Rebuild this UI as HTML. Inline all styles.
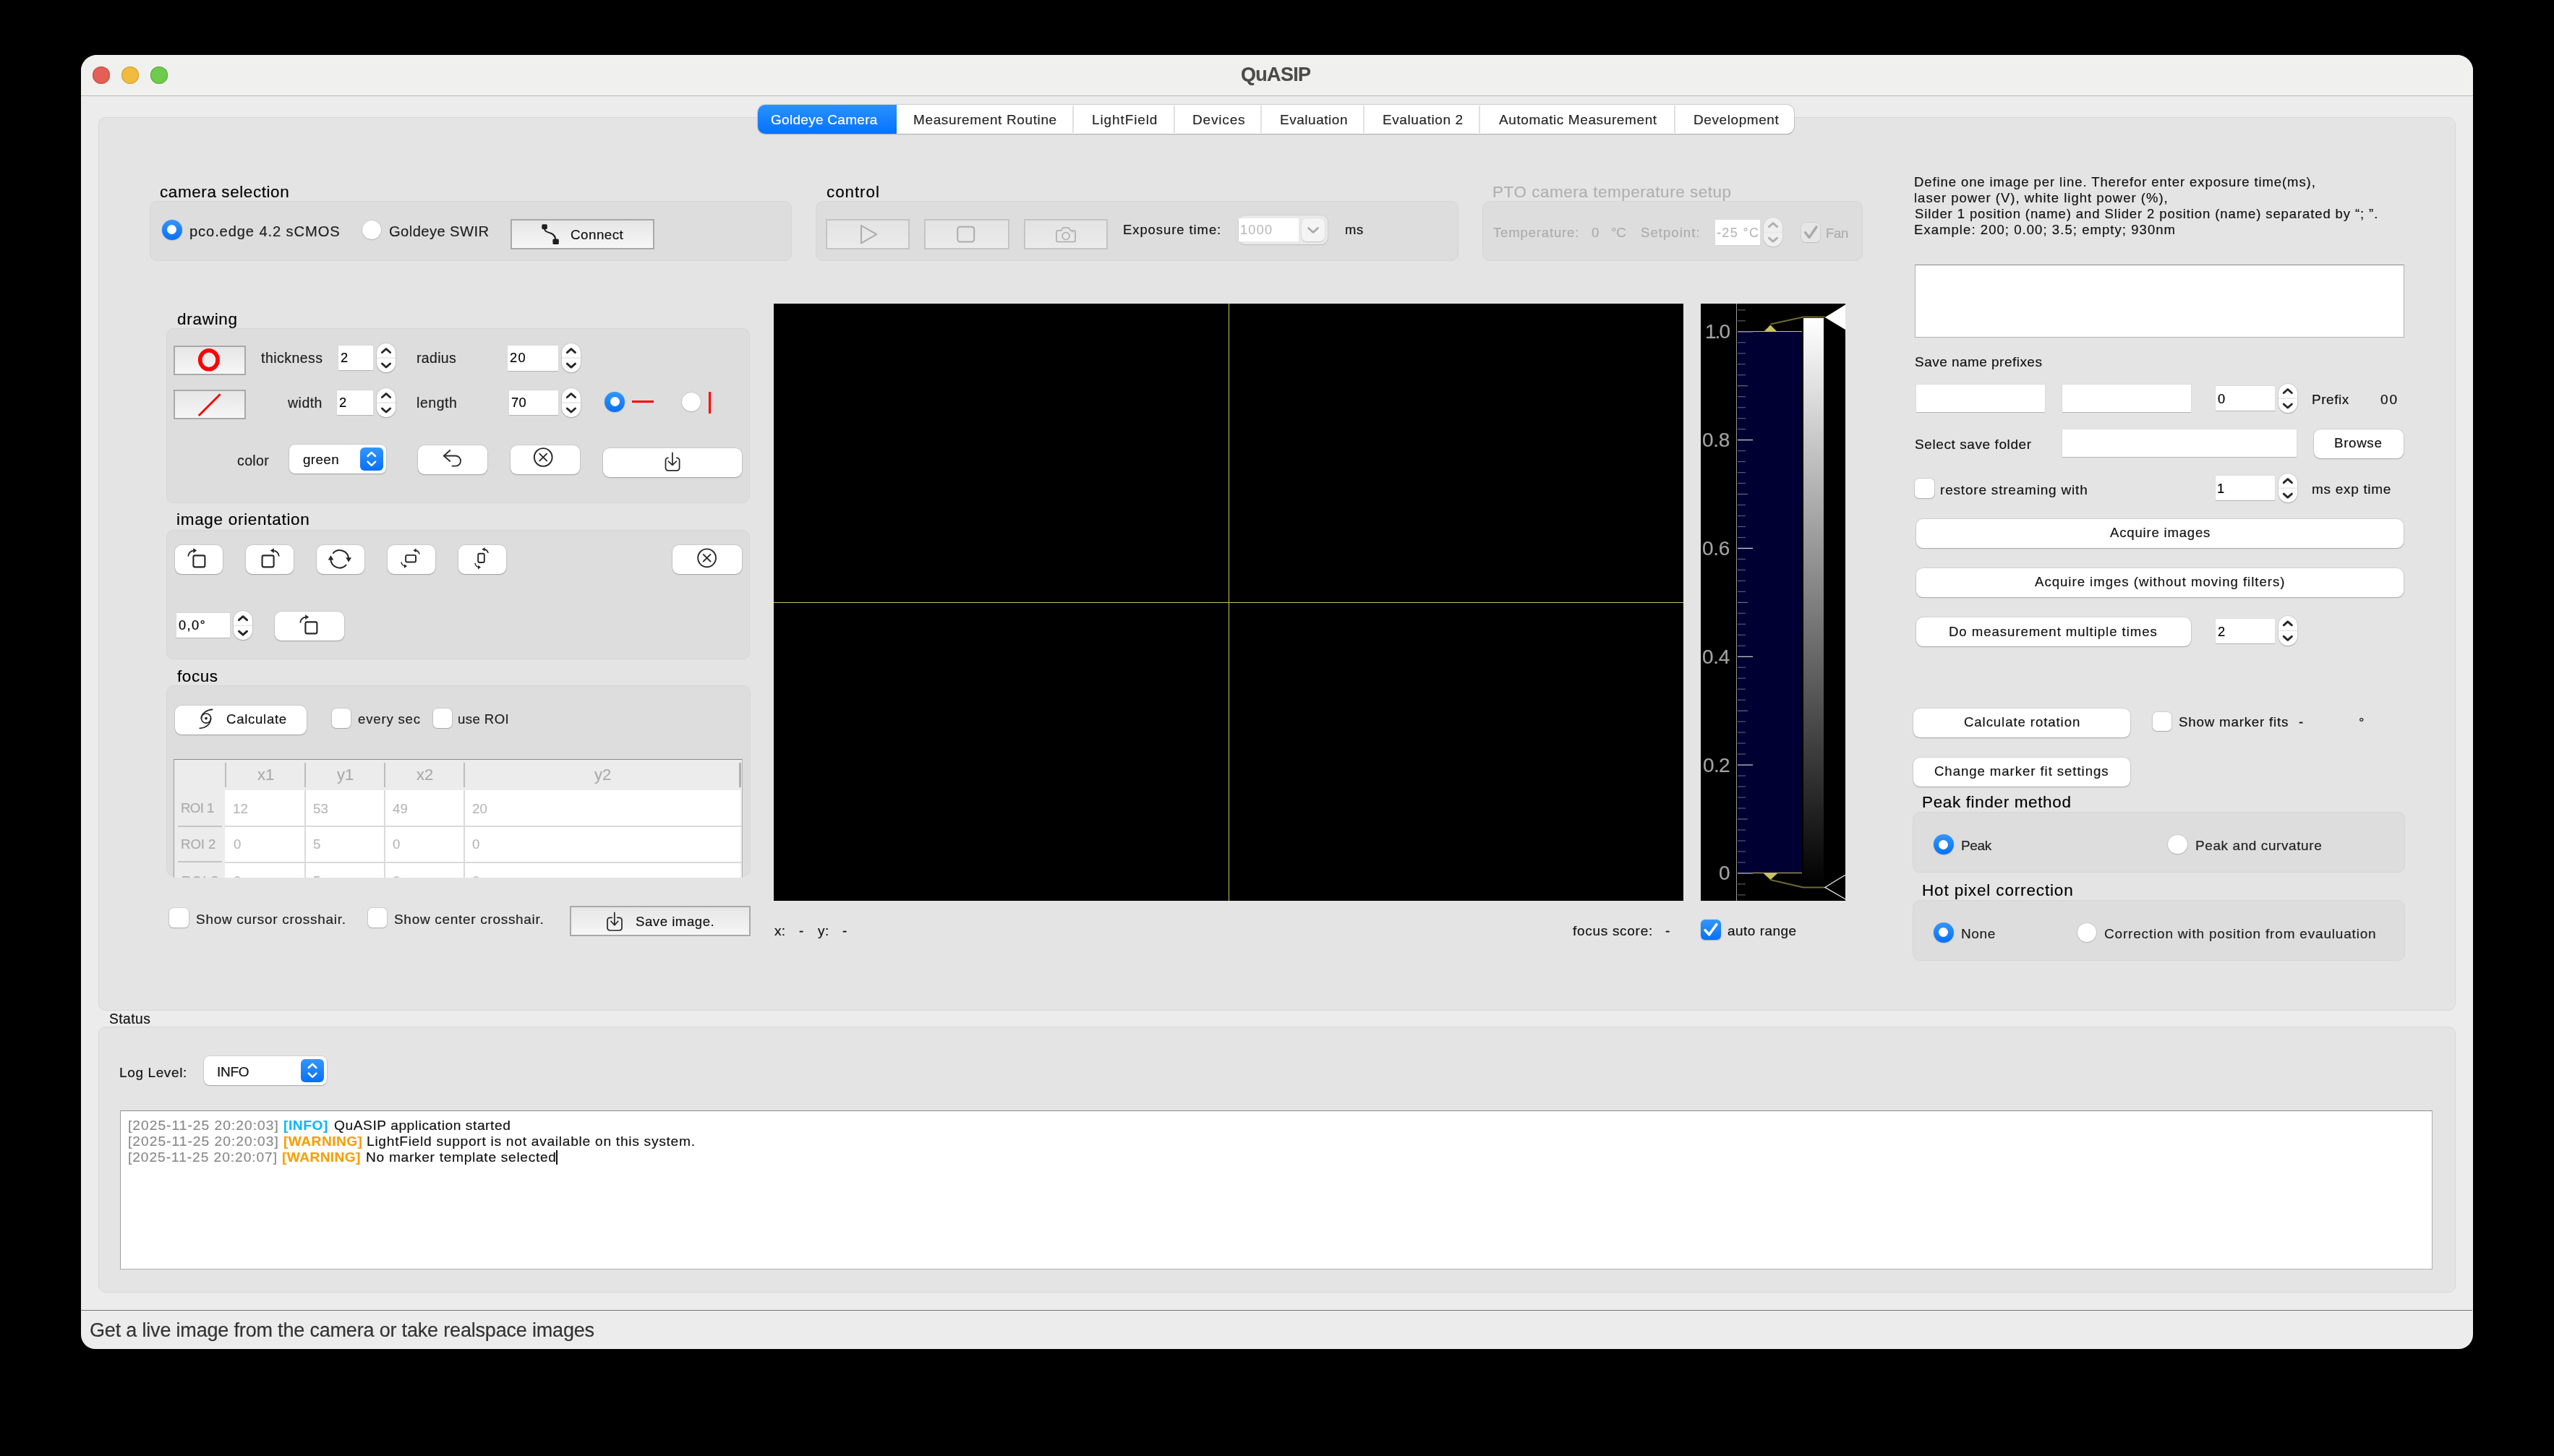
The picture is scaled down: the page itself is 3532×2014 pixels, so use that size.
<!DOCTYPE html>
<html><head><meta charset="utf-8"><style>
html,body{margin:0;padding:0;}
body{width:3532px;height:2014px;background:#000;position:relative;overflow:hidden;font-family:"Liberation Sans",sans-serif;}
body>div,body>svg{position:absolute;box-sizing:border-box;}
.t{white-space:pre;-webkit-text-stroke:0.18px currentColor;will-change:transform;}

.grp{background:#dddddd;border:1px solid #d6d6d6;border-radius:10px;}
.oldbtn{border:2px solid #acacac;background:linear-gradient(#e4e4e4,#f3f3f3);}
.oldbtn.dis{border-color:#c6c6c6;background:linear-gradient(#e2e2e2,#e9e9e9);}
.mbtn{background:#fff;border-radius:9px;box-shadow:0 0.5px 0 0.5px rgba(0,0,0,0.10),0 1.5px 2px rgba(0,0,0,0.18);}
.edit{background:#fff;box-shadow:0 1px 0 #b8b8b8, 0 0 0 0.5px #d0d0d0;}
.spin{background:#fff;border-radius:13px;box-shadow:0 0 0 1px rgba(0,0,0,0.08),0 1px 2px rgba(0,0,0,0.2);}
.radio{border-radius:50%;}
.rad-off{background:#fff;box-shadow:0 0 0 1px rgba(0,0,0,0.10),0 1px 1.5px rgba(0,0,0,0.20);}
.rad-on{background:linear-gradient(#2a8cf7,#0a6cf0);box-shadow:0 1px 1.5px rgba(0,0,0,0.2);}
.cb{background:#fff;border-radius:6px;box-shadow:0 0 0 1px rgba(0,0,0,0.10),0 1px 1.5px rgba(0,0,0,0.18);}

</style></head><body>
<div style="left:112.0px;top:76.0px;width:3308.0px;height:1790.0px;background:#ececec;border-radius:22px 22px 20px 20px;"></div>
<div style="left:112.0px;top:76.0px;width:3308.0px;height:56.0px;background:#f0f0ef;border-radius:22px 22px 0 0;"></div>
<div style="left:112.0px;top:131.8px;width:3308.0px;height:1.3px;background:#bababa;"></div>
<div style="left:128.0px;top:92.0px;width:24.0px;height:24.0px;background:#e45f56;border-radius:50%;box-shadow:inset 0 0 0 1px #c94a3f;"></div>
<div style="left:168.0px;top:92.0px;width:24.0px;height:24.0px;background:#f0bb3e;border-radius:50%;box-shadow:inset 0 0 0 1px #d49f2a;"></div>
<div style="left:208.0px;top:92.0px;width:24.0px;height:24.0px;background:#6fcb4e;border-radius:50%;box-shadow:inset 0 0 0 1px #54a83a;"></div>
<div class="t" style="left:1716.0px;top:89.7px;font-size:27.00px;line-height:27.00px;color:#4b4b4b;font-weight:700;letter-spacing:-0.701px;">QuASIP</div>
<div style="left:136.0px;top:162.0px;width:3260.0px;height:1236.0px;background:#e4e4e4;border:1px solid #d8d8d8;border-radius:10px;"></div>
<div style="left:1048.0px;top:145.0px;width:1433.0px;height:40.0px;background:#fff;border-radius:10px;box-shadow:0 0 0 1px rgba(0,0,0,0.12),0 1px 1.5px rgba(0,0,0,0.15);"></div>
<div style="left:1048.0px;top:145.0px;width:192.0px;height:40.0px;background:linear-gradient(#2991fe,#0573fd);border-radius:10px 0 0 10px;"></div>
<div style="left:1483.0px;top:146.0px;width:2.0px;height:38.0px;background:#e0e0e0;"></div>
<div style="left:1622.5px;top:146.0px;width:2.0px;height:38.0px;background:#e0e0e0;"></div>
<div style="left:1743.0px;top:146.0px;width:2.0px;height:38.0px;background:#e0e0e0;"></div>
<div style="left:1885.0px;top:146.0px;width:2.0px;height:38.0px;background:#e0e0e0;"></div>
<div style="left:2045.0px;top:146.0px;width:2.0px;height:38.0px;background:#e0e0e0;"></div>
<div style="left:2315.0px;top:146.0px;width:2.0px;height:38.0px;background:#e0e0e0;"></div>
<div class="t" style="left:1066.2px;top:156.0px;font-size:19.00px;line-height:19.00px;color:#fff;font-weight:400;letter-spacing:0.288px;">Goldeye Camera</div>
<div class="t" style="left:1263.0px;top:156.0px;font-size:19.00px;line-height:19.00px;color:#262626;font-weight:400;letter-spacing:0.624px;">Measurement Routine</div>
<div class="t" style="left:1509.8px;top:156.0px;font-size:19.00px;line-height:19.00px;color:#262626;font-weight:400;letter-spacing:0.887px;">LightField</div>
<div class="t" style="left:1648.8px;top:156.0px;font-size:19.00px;line-height:19.00px;color:#262626;font-weight:400;letter-spacing:0.837px;">Devices</div>
<div class="t" style="left:1769.7px;top:156.0px;font-size:19.00px;line-height:19.00px;color:#262626;font-weight:400;letter-spacing:0.526px;">Evaluation</div>
<div class="t" style="left:1911.6px;top:156.0px;font-size:19.00px;line-height:19.00px;color:#262626;font-weight:400;letter-spacing:0.590px;">Evaluation 2</div>
<div class="t" style="left:2073.3px;top:156.0px;font-size:19.00px;line-height:19.00px;color:#262626;font-weight:400;letter-spacing:0.608px;">Automatic Measurement</div>
<div class="t" style="left:2341.7px;top:156.0px;font-size:19.00px;line-height:19.00px;color:#262626;font-weight:400;letter-spacing:0.583px;">Development</div>
<div class="t" style="left:220.9px;top:254.7px;font-size:22.50px;line-height:22.50px;color:#000;font-weight:400;letter-spacing:0.576px;">camera selection</div>
<div style="left:206.5px;top:278.2px;width:888.5px;height:83.1px;background:#dddddd;border:1px solid #d5d5d5;border-radius:10px;"></div>
<div style="left:223.9px;top:303.9px;width:28.0px;height:28.0px;background:linear-gradient(#3396fb,#0870f8);border-radius:50%;box-shadow:0 0.5px 1.5px rgba(0,0,0,0.25);"></div>
<div style="left:231.4px;top:311.4px;width:13.0px;height:13.0px;background:#fff;border-radius:50%;"></div>
<div class="t" style="left:261.8px;top:310.0px;font-size:20.20px;line-height:20.20px;color:#1e1e1e;font-weight:400;letter-spacing:0.862px;">pco.edge 4.2 sCMOS</div>
<div style="left:500.6px;top:304.5px;width:26.6px;height:26.6px;background:#fff;border-radius:50%;box-shadow:0 0 0 0.75px rgba(0,0,0,0.09),0 0.75px 1.5px rgba(0,0,0,0.18);"></div>
<div class="t" style="left:537.8px;top:309.6px;font-size:20.20px;line-height:20.20px;color:#1e1e1e;font-weight:400;letter-spacing:0.407px;">Goldeye SWIR</div>
<div style="left:706.3px;top:303.1px;width:199.2px;height:41.9px;border:2px solid #a9a9a9;background:linear-gradient(#e6e6e6,#f6f6f6);"></div>
<svg style="left:747.0px;top:308.0px;" width="30.0" height="32.0" viewBox="0 0 30.0 32.0"><rect x="2.3" y="2.2" width="7.5" height="6.9" rx="1.6" fill="#1e1e1e"/><rect x="17.4" y="22.4" width="8.4" height="7.6" rx="1.6" fill="#1e1e1e"/><path d="M5.6,7 C6,13 10.5,13 15,14.8 C19,16.4 21,19 21.4,24" fill="none" stroke="#1e1e1e" stroke-width="2"/></svg>
<div class="t" style="left:788.8px;top:315.8px;font-size:18.80px;line-height:18.80px;color:#111;font-weight:400;letter-spacing:0.478px;">Connect</div>
<div class="t" style="left:1142.6px;top:254.5px;font-size:22.50px;line-height:22.50px;color:#000;font-weight:400;letter-spacing:0.894px;">control</div>
<div style="left:1128.2px;top:278.4px;width:888.8px;height:82.8px;background:#dddddd;border:1px solid #d5d5d5;border-radius:10px;"></div>
<div style="left:1142.3px;top:303.2px;width:115.3px;height:41.4px;border:2px solid #c4c4c4;background:linear-gradient(#e3e3e3,#ebebeb);"></div>
<svg style="left:1180.0px;top:305.0px;" width="45.0" height="37.0" viewBox="0 0 45.0 37.0"><polygon points="11,7 11,31.4 32.3,19.1" fill="none" stroke="#acacac" stroke-width="2" stroke-linejoin="round"/></svg>
<div style="left:1277.8px;top:303.2px;width:117.8px;height:41.4px;border:2px solid #c4c4c4;background:linear-gradient(#e3e3e3,#ebebeb);"></div>
<svg style="left:1318.0px;top:308.0px;" width="36.0" height="32.0" viewBox="0 0 36.0 32.0"><rect x="6.3" y="5.7" width="22.9" height="20.8" rx="3.5" fill="none" stroke="#acacac" stroke-width="2"/></svg>
<div style="left:1416.0px;top:303.2px;width:115.6px;height:41.4px;border:2px solid #c4c4c4;background:linear-gradient(#e3e3e3,#ebebeb);"></div>
<svg style="left:1456.0px;top:308.0px;" width="36.0" height="32.0" viewBox="0 0 36.0 32.0"><path d="M6.5,11 h5 l2.5,-4 h8 l2.5,4 h5 a1.5,1.5 0 0 1 1.5,1.5 v12.5 a1.5,1.5 0 0 1 -1.5,1.5 h-23 a1.5,1.5 0 0 1 -1.5,-1.5 v-12.5 a1.5,1.5 0 0 1 1.5,-1.5z" fill="none" stroke="#acacac" stroke-width="1.6"/><circle cx="18" cy="18.5" r="5" fill="none" stroke="#acacac" stroke-width="1.6"/><circle cx="27" cy="12.5" r="1" fill="#acacac"/></svg>
<div class="t" style="left:1552.7px;top:309.2px;font-size:18.40px;line-height:18.40px;color:#111;font-weight:400;letter-spacing:0.966px;">Exposure time:</div>
<div style="left:1712.6px;top:298.2px;width:123.0px;height:39.9px;background:#e9e9e9;border-radius:9px;box-shadow:0 0 0 1px rgba(0,0,0,0.05),0 1px 1.5px rgba(0,0,0,0.10);"></div>
<div style="left:1713.2px;top:302.0px;width:82.6px;height:31.8px;background:#fff;"></div>
<div style="left:1800.0px;top:302.1px;width:31.7px;height:31.7px;background:#f4f4f4;border-radius:7px;box-shadow:0 0 0 0.5px rgba(0,0,0,0.06),0 1px 1px rgba(0,0,0,0.12);"></div>
<svg style="left:1800.0px;top:302.0px;" width="32.0" height="32.0" viewBox="0 0 32.0 32.0"><polyline points="9.5,13.5 16,19.5 22.5,13.5" fill="none" stroke="#a8a8a8" stroke-width="2.6" stroke-linecap="round" stroke-linejoin="round"/></svg>
<div class="t" style="left:1715.0px;top:308.6px;font-size:18.00px;line-height:18.00px;color:#bdbdbd;font-weight:400;letter-spacing:1.323px;">1000</div>
<div class="t" style="left:1859.5px;top:309.2px;font-size:18.40px;line-height:18.40px;color:#111;font-weight:400;letter-spacing:0.680px;">ms</div>
<div class="t" style="left:2063.8px;top:255.1px;font-size:22.50px;line-height:22.50px;color:#b0b0b0;font-weight:400;letter-spacing:0.524px;">PTO camera temperature setup</div>
<div style="left:2050.3px;top:278.4px;width:525.3px;height:82.8px;background:#dddddd;border:1px solid #d5d5d5;border-radius:10px;"></div>
<div class="t" style="left:2064.8px;top:313.2px;font-size:18.60px;line-height:18.60px;color:#acacac;font-weight:400;letter-spacing:0.802px;">Temperature:</div>
<div class="t" style="left:2200.7px;top:313.2px;font-size:18.60px;line-height:18.60px;color:#acacac;font-weight:400;letter-spacing:0.000px;">0</div>
<div class="t" style="left:2228.0px;top:313.2px;font-size:18.60px;line-height:18.60px;color:#acacac;font-weight:400;letter-spacing:-0.136px;">°C</div>
<div class="t" style="left:2268.7px;top:313.2px;font-size:18.60px;line-height:18.60px;color:#acacac;font-weight:400;letter-spacing:1.021px;">Setpoint:</div>
<div style="left:2372.2px;top:304.2px;width:61.8px;height:34.5px;background:#fff;box-shadow:0 1px 0 #cfcfcf,0 0 0 0.5px #dcdcdc;"></div>
<div class="t" style="left:2374.4px;top:313.1px;font-size:18.00px;line-height:18.00px;color:#b8b8b8;font-weight:400;letter-spacing:1.377px;">-25 °C</div>
<div style="left:2439.0px;top:300.7px;width:26.0px;height:40.6px;background:#fff;border-radius:13px;box-shadow:0 0 0 1px rgba(0,0,0,0.07),0 1px 1.5px rgba(0,0,0,0.22);opacity:0.55;"></div>
<svg style="left:2439.0px;top:300.7px;" width="26.0" height="40.6" viewBox="0 0 26.0 40.6"><line x1="0" y1="20.3" x2="26.0" y2="20.3" stroke="#e6e6e6" stroke-width="1.5"/><polyline points="7.4,12.7 13.0,7.7 18.6,12.7" fill="none" stroke="#b0b0b0" stroke-width="2.9" stroke-linecap="round" stroke-linejoin="round"/><polyline points="7.4,28.2 13.0,33.2 18.6,28.2" fill="none" stroke="#b0b0b0" stroke-width="2.9" stroke-linecap="round" stroke-linejoin="round"/></svg>
<div style="left:2490.6px;top:308.4px;width:26.7px;height:27.0px;background:#e6e6e6;border-radius:6px;box-shadow:0 0 0 1px rgba(0,0,0,0.05),0 1px 1px rgba(0,0,0,0.08);"></div>
<svg style="left:2490.6px;top:308.4px;" width="26.7" height="27.0" viewBox="0 0 26.7 27.0"><polyline points="5.5,13.5 11,20.5 21,6" fill="none" stroke="#a9a9a9" stroke-width="3.4" stroke-linecap="round" stroke-linejoin="round"/></svg>
<div class="t" style="left:2525.3px;top:313.6px;font-size:18.60px;line-height:18.60px;color:#acacac;font-weight:400;letter-spacing:-0.349px;">Fan</div>
<div class="t" style="left:244.7px;top:430.8px;font-size:22.50px;line-height:22.50px;color:#000;font-weight:400;letter-spacing:0.720px;">drawing</div>
<div style="left:230.2px;top:454.0px;width:807.2px;height:241.5px;background:#dddddd;border:1px solid #d5d5d5;border-radius:10px;"></div>
<div style="left:240.0px;top:477.5px;width:99.8px;height:41.2px;border:2px solid #a9a9a9;background:linear-gradient(#e6e6e6,#f6f6f6);"></div>
<svg style="left:270.0px;top:478.0px;" width="38.0" height="40.0" viewBox="0 0 38.0 40.0"><ellipse cx="18.9" cy="19.8" rx="12.2" ry="13" fill="none" stroke="#ff0000" stroke-width="5.6"/></svg>
<div class="t" style="left:361.0px;top:485.7px;font-size:19.50px;line-height:19.50px;color:#1e1e1e;font-weight:400;letter-spacing:0.471px;">thickness</div>
<div style="left:467.8px;top:477.6px;width:48.2px;height:34.8px;background:#fff;box-shadow:0 1px 0 #b4b4b4,0 0 0 0.5px #d4d4d4;"></div>
<div class="t" style="left:470.6px;top:486.0px;font-size:18.30px;line-height:18.30px;color:#000;font-weight:400;letter-spacing:0.000px;">2</div>
<div style="left:521.0px;top:474.8px;width:26.0px;height:40.2px;background:#fff;border-radius:13px;box-shadow:0 0 0 1px rgba(0,0,0,0.07),0 1px 1.5px rgba(0,0,0,0.22);"></div>
<svg style="left:521.0px;top:474.8px;" width="26.0" height="40.2" viewBox="0 0 26.0 40.2"><line x1="0" y1="20.1" x2="26.0" y2="20.1" stroke="#e6e6e6" stroke-width="1.5"/><polyline points="7.4,12.5 13.0,7.5 18.6,12.5" fill="none" stroke="#262626" stroke-width="2.9" stroke-linecap="round" stroke-linejoin="round"/><polyline points="7.4,28.0 13.0,33.0 18.6,28.0" fill="none" stroke="#262626" stroke-width="2.9" stroke-linecap="round" stroke-linejoin="round"/></svg>
<div class="t" style="left:575.5px;top:486.0px;font-size:19.50px;line-height:19.50px;color:#1e1e1e;font-weight:400;letter-spacing:0.328px;">radius</div>
<div style="left:701.9px;top:477.9px;width:70.1px;height:34.7px;background:#fff;box-shadow:0 1px 0 #b4b4b4,0 0 0 0.5px #d4d4d4;"></div>
<div class="t" style="left:704.7px;top:486.2px;font-size:18.30px;line-height:18.30px;color:#000;font-weight:400;letter-spacing:1.433px;">20</div>
<div style="left:777.0px;top:474.7px;width:25.8px;height:40.3px;background:#fff;border-radius:13px;box-shadow:0 0 0 1px rgba(0,0,0,0.07),0 1px 1.5px rgba(0,0,0,0.22);"></div>
<svg style="left:777.0px;top:474.7px;" width="25.8" height="40.3" viewBox="0 0 25.8 40.3"><line x1="0" y1="20.2" x2="25.8" y2="20.2" stroke="#e6e6e6" stroke-width="1.5"/><polyline points="7.3,12.6 12.9,7.6 18.5,12.6" fill="none" stroke="#262626" stroke-width="2.9" stroke-linecap="round" stroke-linejoin="round"/><polyline points="7.3,28.1 12.9,33.1 18.5,28.1" fill="none" stroke="#262626" stroke-width="2.9" stroke-linecap="round" stroke-linejoin="round"/></svg>
<div style="left:240.0px;top:539.3px;width:99.8px;height:41.2px;border:2px solid #a9a9a9;background:linear-gradient(#e6e6e6,#f6f6f6);"></div>
<svg style="left:270.0px;top:540.0px;" width="40.0" height="40.0" viewBox="0 0 40.0 40.0"><line x1="4.8" y1="35" x2="34.6" y2="5.3" stroke="#ff0000" stroke-width="2.8"/></svg>
<div class="t" style="left:397.7px;top:547.6px;font-size:19.50px;line-height:19.50px;color:#1e1e1e;font-weight:400;letter-spacing:0.481px;">width</div>
<div style="left:465.9px;top:539.8px;width:50.1px;height:34.5px;background:#fff;box-shadow:0 1px 0 #b4b4b4,0 0 0 0.5px #d4d4d4;"></div>
<div class="t" style="left:469.0px;top:548.1px;font-size:18.30px;line-height:18.30px;color:#000;font-weight:400;letter-spacing:0.000px;">2</div>
<div style="left:521.0px;top:536.7px;width:26.0px;height:40.3px;background:#fff;border-radius:13px;box-shadow:0 0 0 1px rgba(0,0,0,0.07),0 1px 1.5px rgba(0,0,0,0.22);"></div>
<svg style="left:521.0px;top:536.7px;" width="26.0" height="40.3" viewBox="0 0 26.0 40.3"><line x1="0" y1="20.1" x2="26.0" y2="20.1" stroke="#e6e6e6" stroke-width="1.5"/><polyline points="7.4,12.5 13.0,7.5 18.6,12.5" fill="none" stroke="#262626" stroke-width="2.9" stroke-linecap="round" stroke-linejoin="round"/><polyline points="7.4,28.0 13.0,33.0 18.6,28.0" fill="none" stroke="#262626" stroke-width="2.9" stroke-linecap="round" stroke-linejoin="round"/></svg>
<div class="t" style="left:575.5px;top:548.0px;font-size:19.50px;line-height:19.50px;color:#1e1e1e;font-weight:400;letter-spacing:0.543px;">length</div>
<div style="left:703.8px;top:539.9px;width:68.2px;height:34.2px;background:#fff;box-shadow:0 1px 0 #b4b4b4,0 0 0 0.5px #d4d4d4;"></div>
<div class="t" style="left:706.5px;top:548.3px;font-size:18.30px;line-height:18.30px;color:#000;font-weight:400;letter-spacing:0.333px;">70</div>
<div style="left:777.0px;top:536.7px;width:25.8px;height:40.2px;background:#fff;border-radius:13px;box-shadow:0 0 0 1px rgba(0,0,0,0.07),0 1px 1.5px rgba(0,0,0,0.22);"></div>
<svg style="left:777.0px;top:536.7px;" width="25.8" height="40.2" viewBox="0 0 25.8 40.2"><line x1="0" y1="20.1" x2="25.8" y2="20.1" stroke="#e6e6e6" stroke-width="1.5"/><polyline points="7.3,12.5 12.9,7.5 18.5,12.5" fill="none" stroke="#262626" stroke-width="2.9" stroke-linecap="round" stroke-linejoin="round"/><polyline points="7.3,28.0 12.9,33.0 18.5,28.0" fill="none" stroke="#262626" stroke-width="2.9" stroke-linecap="round" stroke-linejoin="round"/></svg>
<div style="left:836.0px;top:541.8px;width:28.0px;height:28.0px;background:linear-gradient(#3396fb,#0870f8);border-radius:50%;box-shadow:0 0.5px 1.5px rgba(0,0,0,0.25);"></div>
<div style="left:843.5px;top:549.3px;width:13.0px;height:13.0px;background:#fff;border-radius:50%;"></div>
<div style="left:873.8px;top:554.2px;width:30.2px;height:2.6px;background:#ff0000;"></div>
<div style="left:942.7px;top:542.5px;width:26.6px;height:26.6px;background:#fff;border-radius:50%;box-shadow:0 0 0 0.75px rgba(0,0,0,0.09),0 0.75px 1.5px rgba(0,0,0,0.18);"></div>
<div style="left:980.0px;top:542.0px;width:3.0px;height:29.8px;background:#ff0000;"></div>
<div class="t" style="left:328.1px;top:627.8px;font-size:19.50px;line-height:19.50px;color:#1e1e1e;font-weight:400;letter-spacing:0.382px;">color</div>
<div style="left:400.0px;top:615.0px;width:133.6px;height:40.0px;background:#fff;border-radius:8px;box-shadow:0 0 0 0.75px rgba(0,0,0,0.10),0 1px 1.5px rgba(0,0,0,0.22);"></div>
<div style="left:498.2px;top:619.1px;width:31.6px;height:31.6px;background:linear-gradient(#3396fb,#0870f8);border-radius:6px;"></div>
<svg style="left:498.2px;top:619.1px;" width="31.6" height="31.6" viewBox="0 0 31.6 31.6"><polyline points="10.5,12 15.8,6.8 21.1,12" fill="none" stroke="#fff" stroke-width="2.5" stroke-linecap="round" stroke-linejoin="round"/><polyline points="10.5,19.6 15.8,24.8 21.1,19.6" fill="none" stroke="#fff" stroke-width="2.5" stroke-linecap="round" stroke-linejoin="round"/></svg>
<div class="t" style="left:418.8px;top:626.9px;font-size:18.80px;line-height:18.80px;color:#111;font-weight:400;letter-spacing:0.402px;">green</div>
<div style="left:578.2px;top:616.0px;width:95.6px;height:40.0px;background:#fff;border-radius:9px;box-shadow:0 0 0 0.75px rgba(0,0,0,0.10),0 1px 1.5px rgba(0,0,0,0.22);"></div>
<svg style="left:608.0px;top:620.0px;" width="36.0" height="30.0" viewBox="0 0 36.0 30.0"><path d="M6,10.5 H22 A7.05,7.05 0 0 1 22,24.6 H17.4" fill="none" stroke="#2a2a2a" stroke-width="1.8" stroke-linecap="round"/><polyline points="14.3,3 5.8,10.5 14.3,18" fill="none" stroke="#2a2a2a" stroke-width="1.8" stroke-linecap="round" stroke-linejoin="round"/></svg>
<div style="left:706.3px;top:616.0px;width:95.6px;height:40.0px;background:#fff;border-radius:9px;box-shadow:0 0 0 0.75px rgba(0,0,0,0.10),0 1px 1.5px rgba(0,0,0,0.22);"></div>
<svg style="left:735.0px;top:616.0px;" width="33.0" height="33.0" viewBox="0 0 33.0 33.0"><circle cx="16.2" cy="16.5" r="12.4" fill="none" stroke="#2a2a2a" stroke-width="1.9"/><path d="M11.3,11.6 L21.1,21.4 M21.1,11.6 L11.3,21.4" stroke="#2a2a2a" stroke-width="1.9" stroke-linecap="round"/></svg>
<div style="left:834.0px;top:619.7px;width:191.9px;height:40.6px;background:#fff;border-radius:9px;box-shadow:0 0 0 0.75px rgba(0,0,0,0.10),0 1px 1.5px rgba(0,0,0,0.22);"></div>
<svg style="left:914.0px;top:622.0px;" width="32.0" height="34.0" viewBox="0 0 32.0 34.0"><path d="M10.6,11.4 H9.8 a3.3,3.3 0 0 0 -3.3,3.3 V25.6 a3.3,3.3 0 0 0 3.3,3.3 H22.3 a3.3,3.3 0 0 0 3.3,-3.3 V14.7 a3.3,3.3 0 0 0 -3.3,-3.3 H21.2" fill="none" stroke="#2a2a2a" stroke-width="1.75" stroke-linecap="butt"/><path d="M15.9,4.3 V21.2 M10.4,16.2 L15.9,21.4 L21.4,16.2" fill="none" stroke="#2a2a2a" stroke-width="1.75" stroke-linecap="round" stroke-linejoin="round"/></svg>
<div class="t" style="left:243.7px;top:707.8px;font-size:22.50px;line-height:22.50px;color:#000;font-weight:400;letter-spacing:0.700px;">image orientation</div>
<div style="left:230.2px;top:733.0px;width:807.2px;height:178.5px;background:#dddddd;border:1px solid #d5d5d5;border-radius:10px;"></div>
<div style="left:241.9px;top:753.8px;width:66.0px;height:40.3px;background:#fff;border-radius:9px;box-shadow:0 0 0 0.75px rgba(0,0,0,0.10),0 1px 1.5px rgba(0,0,0,0.22);"></div>
<svg style="left:253.0px;top:753.0px;" width="40.0" height="40.0" viewBox="0 0 40.0 40.0"><g ><rect x="14.4" y="15.4" width="16" height="16" rx="2.3" fill="none" stroke="#262626" stroke-width="2.1"/><path d="M7.3,16.5 A8,8 0 0 1 14.8,8.6" fill="none" stroke="#262626" stroke-width="1.9"/><polygon points="14.2,5.2 19.2,8.6 14.2,12" fill="#262626"/></g></svg>
<div style="left:339.9px;top:753.8px;width:66.0px;height:40.3px;background:#fff;border-radius:9px;box-shadow:0 0 0 0.75px rgba(0,0,0,0.10),0 1px 1.5px rgba(0,0,0,0.22);"></div>
<svg style="left:353.0px;top:753.0px;" width="40.0" height="40.0" viewBox="0 0 40.0 40.0"><g transform="translate(40,0) scale(-1,1)"><rect x="14.4" y="15.4" width="16" height="16" rx="2.3" fill="none" stroke="#262626" stroke-width="2.1"/><path d="M7.3,16.5 A8,8 0 0 1 14.8,8.6" fill="none" stroke="#262626" stroke-width="1.9"/><polygon points="14.2,5.2 19.2,8.6 14.2,12" fill="#262626"/></g></svg>
<div style="left:438.0px;top:753.8px;width:66.0px;height:40.3px;background:#fff;border-radius:9px;box-shadow:0 0 0 0.75px rgba(0,0,0,0.10),0 1px 1.5px rgba(0,0,0,0.22);"></div>
<svg style="left:449.0px;top:753.0px;" width="40.0" height="40.0" viewBox="0 0 40.0 40.0"><path d="M11.4,12.6 A12.3,12.3 0 0 1 33,18.8" fill="none" stroke="#262626" stroke-width="2"/><polygon points="29.2,18.2 37,18.2 33.1,24.4" fill="#262626"/><path d="M30,28.2 A12.3,12.3 0 0 1 8.4,21" fill="none" stroke="#262626" stroke-width="2"/><polygon points="4.7,21.5 12.3,21.5 8.5,15.3" fill="#262626"/></svg>
<div style="left:536.0px;top:753.8px;width:65.8px;height:40.3px;background:#fff;border-radius:9px;box-shadow:0 0 0 0.75px rgba(0,0,0,0.10),0 1px 1.5px rgba(0,0,0,0.22);"></div>
<svg style="left:549.0px;top:753.0px;" width="40.0" height="40.0" viewBox="0 0 40.0 40.0"><rect x="12.1" y="14.9" width="13.9" height="9.6" rx="2" fill="none" stroke="#262626" stroke-width="1.9"/><path d="M24,8.5 a6,6 0 0 1 7,5" fill="none" stroke="#262626" stroke-width="1.6"/><polygon points="26.5,5.5 22.5,8.5 26.5,11" fill="#262626"/><path d="M12,30 a6,6 0 0 1 -6,-5.5" fill="none" stroke="#262626" stroke-width="1.6"/><polygon points="10,27.5 14,30 10,33" fill="#262626"/></svg>
<div style="left:633.9px;top:753.8px;width:66.1px;height:40.3px;background:#fff;border-radius:9px;box-shadow:0 0 0 0.75px rgba(0,0,0,0.10),0 1px 1.5px rgba(0,0,0,0.22);"></div>
<svg style="left:647.0px;top:753.0px;" width="40.0" height="40.0" viewBox="0 0 40.0 40.0"><rect x="14.2" y="12.8" width="8.6" height="12.2" rx="2" fill="none" stroke="#262626" stroke-width="1.9"/><path d="M21,7 a6,6 0 0 1 7,5" fill="none" stroke="#262626" stroke-width="1.6"/><polygon points="23.5,4 19.5,7 23.5,9.5" fill="#262626"/><path d="M16,31.5 a6,6 0 0 1 -6,-5.5" fill="none" stroke="#262626" stroke-width="1.6"/><polygon points="14,29 18,31.5 14,34.5" fill="#262626"/></svg>
<div style="left:930.0px;top:753.8px;width:96.0px;height:40.3px;background:#fff;border-radius:9px;box-shadow:0 0 0 0.75px rgba(0,0,0,0.10),0 1px 1.5px rgba(0,0,0,0.22);"></div>
<svg style="left:961.0px;top:756.0px;" width="33.0" height="33.0" viewBox="0 0 33.0 33.0"><circle cx="16.6" cy="15.8" r="12.4" fill="none" stroke="#2a2a2a" stroke-width="1.9"/><path d="M11.7,10.9 L21.5,20.7 M21.5,10.9 L11.7,20.7" stroke="#2a2a2a" stroke-width="1.9" stroke-linecap="round"/></svg>
<div style="left:243.8px;top:847.8px;width:74.5px;height:34.6px;background:#fff;box-shadow:0 1px 0 #b4b4b4,0 0 0 0.5px #d4d4d4;"></div>
<div class="t" style="left:246.9px;top:855.8px;font-size:18.30px;line-height:18.30px;color:#000;font-weight:400;letter-spacing:1.329px;">0,0°</div>
<div style="left:323.0px;top:844.6px;width:26.0px;height:40.6px;background:#fff;border-radius:13px;box-shadow:0 0 0 1px rgba(0,0,0,0.07),0 1px 1.5px rgba(0,0,0,0.22);"></div>
<svg style="left:323.0px;top:844.6px;" width="26.0" height="40.6" viewBox="0 0 26.0 40.6"><line x1="0" y1="20.3" x2="26.0" y2="20.3" stroke="#e6e6e6" stroke-width="1.5"/><polyline points="7.4,12.7 13.0,7.7 18.6,12.7" fill="none" stroke="#262626" stroke-width="2.9" stroke-linecap="round" stroke-linejoin="round"/><polyline points="7.4,28.2 13.0,33.2 18.6,28.2" fill="none" stroke="#262626" stroke-width="2.9" stroke-linecap="round" stroke-linejoin="round"/></svg>
<div style="left:380.0px;top:845.9px;width:96.0px;height:40.3px;background:#fff;border-radius:9px;box-shadow:0 0 0 0.75px rgba(0,0,0,0.10),0 1px 1.5px rgba(0,0,0,0.22);"></div>
<svg style="left:408.0px;top:845.0px;" width="40.0" height="40.0" viewBox="0 0 40.0 40.0"><g ><rect x="14.4" y="15.4" width="16" height="16" rx="2.3" fill="none" stroke="#262626" stroke-width="2.1"/><path d="M7.3,16.5 A8,8 0 0 1 14.8,8.6" fill="none" stroke="#262626" stroke-width="1.9"/><polygon points="14.2,5.2 19.2,8.6 14.2,12" fill="#262626"/></g></svg>
<div class="t" style="left:244.7px;top:924.7px;font-size:22.50px;line-height:22.50px;color:#000;font-weight:400;letter-spacing:0.568px;">focus</div>
<div style="left:230.2px;top:948.4px;width:807.6px;height:263.4px;background:#dddddd;border:1px solid #d5d5d5;border-radius:10px;"></div>
<div style="left:242.1px;top:976.2px;width:181.7px;height:39.7px;background:#fff;border-radius:9px;box-shadow:0 0 0 0.75px rgba(0,0,0,0.10),0 1px 1.5px rgba(0,0,0,0.22);"></div>
<svg style="left:272.0px;top:978.0px;" width="26.0" height="34.0" viewBox="0 0 26.0 34.0"><circle cx="13" cy="15.6" r="6.6" fill="none" stroke="#262626" stroke-width="1.7"/><path d="M21.8,3.4 C14,3.8 6.6,9 6.4,15.6" fill="none" stroke="#262626" stroke-width="1.7" stroke-linecap="round"/><path d="M19.6,15.6 C19.6,23.5 12.5,29.2 4.3,29.3" fill="none" stroke="#262626" stroke-width="1.7" stroke-linecap="round"/><circle cx="13" cy="15.6" r="1.9" fill="#262626"/></svg>
<div class="t" style="left:313.2px;top:985.8px;font-size:18.60px;line-height:18.60px;color:#111;font-weight:400;letter-spacing:0.703px;">Calculate</div>
<div style="left:458.7px;top:980.3px;width:26.4px;height:26.8px;background:#fff;border-radius:6px;box-shadow:0 0 0 1px rgba(0,0,0,0.09),0 1px 1.5px rgba(0,0,0,0.18);"></div>
<div class="t" style="left:494.7px;top:985.8px;font-size:18.60px;line-height:18.60px;color:#1e1e1e;font-weight:400;letter-spacing:0.804px;">every sec</div>
<div style="left:598.6px;top:980.3px;width:26.4px;height:26.8px;background:#fff;border-radius:6px;box-shadow:0 0 0 1px rgba(0,0,0,0.09),0 1px 1.5px rgba(0,0,0,0.18);"></div>
<div class="t" style="left:633.3px;top:985.8px;font-size:18.60px;line-height:18.60px;color:#1e1e1e;font-weight:400;letter-spacing:0.411px;">use ROI</div>
<div style="left:240.4px;top:1050.4px;width:786.6px;height:163.2px;overflow:hidden;background:#ececec;border-top:1.5px solid #8a8a8a;border-left:1.5px solid #9a9a9a;border-right:1.2px solid #b4b4b4;"><div style="position:absolute;left:70px;top:42px;width:712.5px;height:200px;background:#fff;"></div><div style="position:absolute;left:69.5px;top:4px;width:2px;height:34px;background:#bdbdbd;"></div><div style="position:absolute;left:179.5px;top:4px;width:2px;height:34px;background:#bdbdbd;"></div><div style="position:absolute;left:289.5px;top:4px;width:2px;height:34px;background:#bdbdbd;"></div><div style="position:absolute;left:399.5px;top:4px;width:2px;height:34px;background:#bdbdbd;"></div><div style="position:absolute;left:781px;top:4px;width:3px;height:34px;background:#b0b0b0;"></div><div style="position:absolute;left:70px;top:90.9px;width:715px;height:2px;background:#dadada;"></div><div style="position:absolute;left:70px;top:140.3px;width:715px;height:2px;background:#dadada;"></div><div style="position:absolute;left:179.5px;top:42px;width:2px;height:200px;background:#dadada;"></div><div style="position:absolute;left:289.5px;top:42px;width:2px;height:200px;background:#dadada;"></div><div style="position:absolute;left:399.5px;top:42px;width:2px;height:200px;background:#dadada;"></div><div style="position:absolute;left:4.5px;top:90.5px;width:61.5px;height:2.2px;background:#c4c4c4;"></div><div style="position:absolute;left:4.5px;top:139.9px;width:61.5px;height:2.2px;background:#c4c4c4;"></div></div>
<div class="t" style="left:355.8px;top:1061.2px;font-size:22.00px;line-height:22.00px;color:#ababab;font-weight:400;letter-spacing:0.000px;">x1</div>
<div class="t" style="left:466.0px;top:1061.2px;font-size:22.00px;line-height:22.00px;color:#ababab;font-weight:400;letter-spacing:0.000px;">y1</div>
<div class="t" style="left:576.0px;top:1061.2px;font-size:22.00px;line-height:22.00px;color:#ababab;font-weight:400;letter-spacing:0.000px;">x2</div>
<div class="t" style="left:822.0px;top:1061.2px;font-size:22.00px;line-height:22.00px;color:#ababab;font-weight:400;letter-spacing:0.000px;">y2</div>
<div class="t" style="left:249.9px;top:1108.8px;font-size:18.70px;line-height:18.70px;color:#ababab;font-weight:400;letter-spacing:-0.629px;">ROI 1</div>
<div class="t" style="left:321.8px;top:1109.5px;font-size:18.70px;line-height:18.70px;color:#b8b8b8;font-weight:400;letter-spacing:0.000px;">12</div>
<div class="t" style="left:432.6px;top:1109.5px;font-size:18.70px;line-height:18.70px;color:#b8b8b8;font-weight:400;letter-spacing:0.000px;">53</div>
<div class="t" style="left:542.7px;top:1109.5px;font-size:18.70px;line-height:18.70px;color:#b8b8b8;font-weight:400;letter-spacing:0.000px;">49</div>
<div class="t" style="left:653.0px;top:1109.5px;font-size:18.70px;line-height:18.70px;color:#b8b8b8;font-weight:400;letter-spacing:0.000px;">20</div>
<div class="t" style="left:249.9px;top:1158.5px;font-size:18.70px;line-height:18.70px;color:#ababab;font-weight:400;letter-spacing:-0.079px;">ROI 2</div>
<div class="t" style="left:322.8px;top:1159.2px;font-size:18.70px;line-height:18.70px;color:#b8b8b8;font-weight:400;letter-spacing:0.000px;">0</div>
<div class="t" style="left:432.6px;top:1159.2px;font-size:18.70px;line-height:18.70px;color:#b8b8b8;font-weight:400;letter-spacing:0.000px;">5</div>
<div class="t" style="left:542.7px;top:1159.2px;font-size:18.70px;line-height:18.70px;color:#b8b8b8;font-weight:400;letter-spacing:0.000px;">0</div>
<div class="t" style="left:653.0px;top:1159.2px;font-size:18.70px;line-height:18.70px;color:#b8b8b8;font-weight:400;letter-spacing:0.000px;">0</div>
<div style="left:240px;top:1195px;width:790px;height:18.6px;overflow:hidden;"><div class="t" style="position:absolute;left:10.5px;top:14.5px;font-size:18.7px;line-height:18.7px;color:#ababab;letter-spacing:0.6px;">ROI 3</div><div class="t" style="position:absolute;left:82.8px;top:14.5px;font-size:18.7px;line-height:18.7px;color:#b8b8b8;">0</div><div class="t" style="position:absolute;left:192.6px;top:14.5px;font-size:18.7px;line-height:18.7px;color:#b8b8b8;">5</div><div class="t" style="position:absolute;left:302.7px;top:14.5px;font-size:18.7px;line-height:18.7px;color:#b8b8b8;">0</div><div class="t" style="position:absolute;left:413.0px;top:14.5px;font-size:18.7px;line-height:18.7px;color:#b8b8b8;">0</div></div>
<div style="left:234.4px;top:1256.3px;width:27.0px;height:27.0px;background:#fff;border-radius:6px;box-shadow:0 0 0 1px rgba(0,0,0,0.09),0 1px 1.5px rgba(0,0,0,0.18);"></div>
<div class="t" style="left:270.7px;top:1261.6px;font-size:19.00px;line-height:19.00px;color:#1e1e1e;font-weight:400;letter-spacing:0.705px;">Show cursor crosshair.</div>
<div style="left:508.6px;top:1256.3px;width:26.8px;height:27.0px;background:#fff;border-radius:6px;box-shadow:0 0 0 1px rgba(0,0,0,0.09),0 1px 1.5px rgba(0,0,0,0.18);"></div>
<div class="t" style="left:544.5px;top:1261.6px;font-size:19.00px;line-height:19.00px;color:#1e1e1e;font-weight:400;letter-spacing:0.694px;">Show center crosshair.</div>
<div style="left:788.4px;top:1253.0px;width:249.2px;height:42.0px;border:2px solid #a9a9a9;background:linear-gradient(#e6e6e6,#f6f6f6);"></div>
<svg style="left:834.0px;top:1258.0px;" width="32.0" height="34.0" viewBox="0 0 32.0 34.0"><path d="M12.8,11.3 H9.5 a3.5,3.5 0 0 0 -3.5,3.5 V25.5 a3.5,3.5 0 0 0 3.5,3.5 H22.5 a3.5,3.5 0 0 0 3.5,-3.5 V14.8 a3.5,3.5 0 0 0 -3.5,-3.5 H19.1" fill="none" stroke="#262626" stroke-width="1.7" stroke-linecap="butt"/><path d="M15.8,4.3 V21.5 M11,16.3 L15.8,21.7 L20.7,16.3" fill="none" stroke="#262626" stroke-width="1.7" stroke-linecap="round" stroke-linejoin="round"/></svg>
<div class="t" style="left:878.7px;top:1266.1px;font-size:18.60px;line-height:18.60px;color:#111;font-weight:400;letter-spacing:0.531px;">Save image.</div>
<div style="left:1070.0px;top:420.0px;width:1258.0px;height:825.5px;background:#000;"></div>
<div style="left:1070.0px;top:832.5px;width:1258.0px;height:1.0px;background:#c7c35e;"></div>
<div style="left:1699.0px;top:420.0px;width:1.0px;height:825.5px;background:#c7c35e;"></div>
<div style="left:2352.0px;top:420.0px;width:200.0px;height:825.8px;background:#000;"></div>
<div style="left:2403.2px;top:458.2px;width:88.8px;height:749.1px;background:#000033;"></div>
<div style="left:2401.0px;top:420.0px;width:1.0px;height:825.8px;background:#9a9a9a;"></div>
<svg style="left:2403.0px;top:420.0px;" width="22.0" height="825.8" viewBox="0 0 22.0 825.8"><line x1="0" y1="817.9" x2="11" y2="817.9" stroke="#7a7a8a" stroke-width="1.15" stroke-opacity="0.75"/><line x1="0" y1="802.9" x2="11" y2="802.9" stroke="#7a7a8a" stroke-width="1.15" stroke-opacity="0.75"/><line x1="0" y1="787.9" x2="21" y2="787.9" stroke="#dcdcdc" stroke-width="1.15" stroke-opacity="1"/><line x1="0" y1="772.9" x2="11" y2="772.9" stroke="#7a7a8a" stroke-width="1.15" stroke-opacity="0.75"/><line x1="0" y1="757.9" x2="11" y2="757.9" stroke="#7a7a8a" stroke-width="1.15" stroke-opacity="0.75"/><line x1="0" y1="743.0" x2="11" y2="743.0" stroke="#7a7a8a" stroke-width="1.15" stroke-opacity="0.75"/><line x1="0" y1="728.0" x2="11" y2="728.0" stroke="#7a7a8a" stroke-width="1.15" stroke-opacity="0.75"/><line x1="0" y1="713.0" x2="14" y2="713.0" stroke="#8c8c8c" stroke-width="1.15" stroke-opacity="0.8"/><line x1="0" y1="698.0" x2="11" y2="698.0" stroke="#7a7a8a" stroke-width="1.15" stroke-opacity="0.75"/><line x1="0" y1="683.0" x2="11" y2="683.0" stroke="#7a7a8a" stroke-width="1.15" stroke-opacity="0.75"/><line x1="0" y1="668.0" x2="11" y2="668.0" stroke="#7a7a8a" stroke-width="1.15" stroke-opacity="0.75"/><line x1="0" y1="653.1" x2="11" y2="653.1" stroke="#7a7a8a" stroke-width="1.15" stroke-opacity="0.75"/><line x1="0" y1="638.1" x2="21" y2="638.1" stroke="#dcdcdc" stroke-width="1.15" stroke-opacity="1"/><line x1="0" y1="623.1" x2="11" y2="623.1" stroke="#7a7a8a" stroke-width="1.15" stroke-opacity="0.75"/><line x1="0" y1="608.1" x2="11" y2="608.1" stroke="#7a7a8a" stroke-width="1.15" stroke-opacity="0.75"/><line x1="0" y1="593.1" x2="11" y2="593.1" stroke="#7a7a8a" stroke-width="1.15" stroke-opacity="0.75"/><line x1="0" y1="578.2" x2="11" y2="578.2" stroke="#7a7a8a" stroke-width="1.15" stroke-opacity="0.75"/><line x1="0" y1="563.2" x2="14" y2="563.2" stroke="#8c8c8c" stroke-width="1.15" stroke-opacity="0.8"/><line x1="0" y1="548.2" x2="11" y2="548.2" stroke="#7a7a8a" stroke-width="1.15" stroke-opacity="0.75"/><line x1="0" y1="533.2" x2="11" y2="533.2" stroke="#7a7a8a" stroke-width="1.15" stroke-opacity="0.75"/><line x1="0" y1="518.2" x2="11" y2="518.2" stroke="#7a7a8a" stroke-width="1.15" stroke-opacity="0.75"/><line x1="0" y1="503.2" x2="11" y2="503.2" stroke="#7a7a8a" stroke-width="1.15" stroke-opacity="0.75"/><line x1="0" y1="488.3" x2="21" y2="488.3" stroke="#dcdcdc" stroke-width="1.15" stroke-opacity="1"/><line x1="0" y1="473.3" x2="11" y2="473.3" stroke="#7a7a8a" stroke-width="1.15" stroke-opacity="0.75"/><line x1="0" y1="458.3" x2="11" y2="458.3" stroke="#7a7a8a" stroke-width="1.15" stroke-opacity="0.75"/><line x1="0" y1="443.3" x2="11" y2="443.3" stroke="#7a7a8a" stroke-width="1.15" stroke-opacity="0.75"/><line x1="0" y1="428.3" x2="11" y2="428.3" stroke="#7a7a8a" stroke-width="1.15" stroke-opacity="0.75"/><line x1="0" y1="413.4" x2="14" y2="413.4" stroke="#8c8c8c" stroke-width="1.15" stroke-opacity="0.8"/><line x1="0" y1="398.4" x2="11" y2="398.4" stroke="#7a7a8a" stroke-width="1.15" stroke-opacity="0.75"/><line x1="0" y1="383.4" x2="11" y2="383.4" stroke="#7a7a8a" stroke-width="1.15" stroke-opacity="0.75"/><line x1="0" y1="368.4" x2="11" y2="368.4" stroke="#7a7a8a" stroke-width="1.15" stroke-opacity="0.75"/><line x1="0" y1="353.4" x2="11" y2="353.4" stroke="#7a7a8a" stroke-width="1.15" stroke-opacity="0.75"/><line x1="0" y1="338.4" x2="21" y2="338.4" stroke="#dcdcdc" stroke-width="1.15" stroke-opacity="1"/><line x1="0" y1="323.5" x2="11" y2="323.5" stroke="#7a7a8a" stroke-width="1.15" stroke-opacity="0.75"/><line x1="0" y1="308.5" x2="11" y2="308.5" stroke="#7a7a8a" stroke-width="1.15" stroke-opacity="0.75"/><line x1="0" y1="293.5" x2="11" y2="293.5" stroke="#7a7a8a" stroke-width="1.15" stroke-opacity="0.75"/><line x1="0" y1="278.5" x2="11" y2="278.5" stroke="#7a7a8a" stroke-width="1.15" stroke-opacity="0.75"/><line x1="0" y1="263.5" x2="14" y2="263.5" stroke="#8c8c8c" stroke-width="1.15" stroke-opacity="0.8"/><line x1="0" y1="248.5" x2="11" y2="248.5" stroke="#7a7a8a" stroke-width="1.15" stroke-opacity="0.75"/><line x1="0" y1="233.6" x2="11" y2="233.6" stroke="#7a7a8a" stroke-width="1.15" stroke-opacity="0.75"/><line x1="0" y1="218.6" x2="11" y2="218.6" stroke="#7a7a8a" stroke-width="1.15" stroke-opacity="0.75"/><line x1="0" y1="203.6" x2="11" y2="203.6" stroke="#7a7a8a" stroke-width="1.15" stroke-opacity="0.75"/><line x1="0" y1="188.6" x2="21" y2="188.6" stroke="#dcdcdc" stroke-width="1.15" stroke-opacity="1"/><line x1="0" y1="173.6" x2="11" y2="173.6" stroke="#7a7a8a" stroke-width="1.15" stroke-opacity="0.75"/><line x1="0" y1="158.7" x2="11" y2="158.7" stroke="#7a7a8a" stroke-width="1.15" stroke-opacity="0.75"/><line x1="0" y1="143.7" x2="11" y2="143.7" stroke="#7a7a8a" stroke-width="1.15" stroke-opacity="0.75"/><line x1="0" y1="128.7" x2="11" y2="128.7" stroke="#7a7a8a" stroke-width="1.15" stroke-opacity="0.75"/><line x1="0" y1="113.7" x2="14" y2="113.7" stroke="#8c8c8c" stroke-width="1.15" stroke-opacity="0.8"/><line x1="0" y1="98.7" x2="11" y2="98.7" stroke="#7a7a8a" stroke-width="1.15" stroke-opacity="0.75"/><line x1="0" y1="83.7" x2="11" y2="83.7" stroke="#7a7a8a" stroke-width="1.15" stroke-opacity="0.75"/><line x1="0" y1="68.8" x2="11" y2="68.8" stroke="#7a7a8a" stroke-width="1.15" stroke-opacity="0.75"/><line x1="0" y1="53.8" x2="11" y2="53.8" stroke="#7a7a8a" stroke-width="1.15" stroke-opacity="0.75"/><line x1="0" y1="38.8" x2="21" y2="38.8" stroke="#dcdcdc" stroke-width="1.15" stroke-opacity="1"/><line x1="0" y1="23.8" x2="11" y2="23.8" stroke="#7a7a8a" stroke-width="1.15" stroke-opacity="0.75"/><line x1="0" y1="8.8" x2="11" y2="8.8" stroke="#7a7a8a" stroke-width="1.15" stroke-opacity="0.75"/></svg>
<div style="left:2494.0px;top:440.0px;width:28.0px;height:787.0px;background:linear-gradient(#ffffff,#000000);"></div>
<div style="left:2424.0px;top:457.6px;width:68.0px;height:1.8px;background:#c9c45a;"></div>
<div style="left:2403.0px;top:457.6px;width:21.0px;height:1.8px;background:#8a8fa8;"></div>
<div style="left:2424.0px;top:1206.6px;width:68.0px;height:1.8px;background:#c9c45a;"></div>
<div style="left:2403.0px;top:1206.6px;width:21.0px;height:1.8px;background:#8a8fa8;"></div>
<svg style="left:2352.0px;top:420.0px;" width="200.0" height="826.0" viewBox="0 0 200.0 826.0"><polygon points="87.2,38.8 96.4,29.5 105.6,38.8" fill="#c9c45a"/><polyline points="96.4,28.4 141.6,18.5 171.8,18.5" fill="none" stroke="#6e6a2e" stroke-width="2"/><polygon points="171.8,19 200,1.4 200,36" fill="#ffffff"/><polygon points="86.7,788 106.2,788 96.4,797" fill="#c9c45a"/><polyline points="96.4,797 141.6,807.4 171.8,807.4" fill="none" stroke="#6e6a2e" stroke-width="2"/><polyline points="200,790.3 171.8,807.4 200,823.8" fill="none" stroke="#e0e0e0" stroke-width="1.3"/></svg>
<div class="t" style="left:2357.6px;top:445.4px;font-size:28.00px;line-height:28.00px;color:#a3a3a3;font-weight:400;letter-spacing:-1.976px;">1.0</div>
<div class="t" style="left:2354.3px;top:595.2px;font-size:28.00px;line-height:28.00px;color:#a3a3a3;font-weight:400;letter-spacing:-0.326px;">0.8</div>
<div class="t" style="left:2354.3px;top:745.0px;font-size:28.00px;line-height:28.00px;color:#a3a3a3;font-weight:400;letter-spacing:-0.326px;">0.6</div>
<div class="t" style="left:2354.3px;top:894.8px;font-size:28.00px;line-height:28.00px;color:#a3a3a3;font-weight:400;letter-spacing:-0.326px;">0.4</div>
<div class="t" style="left:2355.0px;top:1044.6px;font-size:28.00px;line-height:28.00px;color:#a3a3a3;font-weight:400;letter-spacing:-0.676px;">0.2</div>
<div class="t" style="left:2376.5px;top:1193.7px;font-size:28.00px;line-height:28.00px;color:#a3a3a3;font-weight:400;letter-spacing:0.000px;">0</div>
<div class="t" style="left:1070.6px;top:1277.6px;font-size:19.00px;line-height:19.00px;color:#111;font-weight:400;letter-spacing:0.200px;">x:</div>
<div class="t" style="left:1104.8px;top:1277.6px;font-size:19.00px;line-height:19.00px;color:#111;font-weight:400;letter-spacing:0.000px;">-</div>
<div class="t" style="left:1130.5px;top:1277.6px;font-size:19.00px;line-height:19.00px;color:#111;font-weight:400;letter-spacing:0.400px;">y:</div>
<div class="t" style="left:1165.0px;top:1277.6px;font-size:19.00px;line-height:19.00px;color:#111;font-weight:400;letter-spacing:0.000px;">-</div>
<div class="t" style="left:2174.7px;top:1277.5px;font-size:19.00px;line-height:19.00px;color:#111;font-weight:400;letter-spacing:0.704px;">focus score:</div>
<div class="t" style="left:2302.8px;top:1277.5px;font-size:19.00px;line-height:19.00px;color:#111;font-weight:400;letter-spacing:0.000px;">-</div>
<div style="left:2352.1px;top:1271.9px;width:27.9px;height:28.1px;background:linear-gradient(#3396fb,#0870f8);border-radius:6px;box-shadow:0 0.5px 1.5px rgba(0,0,0,0.25);"></div>
<svg style="left:2352.1px;top:1271.9px;" width="27.9" height="28.1" viewBox="0 0 27.9 28.1"><polyline points="6.1,14.6 11.7,20.8 21.8,6.7" fill="none" stroke="#fff" stroke-width="3.6" stroke-linecap="round" stroke-linejoin="round"/></svg>
<div class="t" style="left:2388.7px;top:1277.5px;font-size:19.00px;line-height:19.00px;color:#111;font-weight:400;letter-spacing:0.479px;">auto range</div>
<div class="t" style="left:2647.4px;top:243.1px;font-size:18.50px;line-height:18.50px;color:#111;font-weight:400;letter-spacing:0.904px;">Define one image per line. Therefor enter exposure time(ms),</div>
<div class="t" style="left:2647.4px;top:265.1px;font-size:18.50px;line-height:18.50px;color:#111;font-weight:400;letter-spacing:1.005px;">laser power (V), white light power (%),</div>
<div class="t" style="left:2648.4px;top:286.9px;font-size:18.50px;line-height:18.50px;color:#111;font-weight:400;letter-spacing:0.893px;">Silder 1 position (name) and Slider 2 position (name) separated by “; ”.</div>
<div class="t" style="left:2647.4px;top:309.0px;font-size:18.50px;line-height:18.50px;color:#111;font-weight:400;letter-spacing:1.058px;">Example: 200; 0.00; 3.5; empty; 930nm</div>
<div style="left:2648.0px;top:366.0px;width:677.0px;height:101.0px;background:#fff;border:1.2px solid #b0b0b0;border-top:1.6px solid #8e8e8e;"></div>
<div class="t" style="left:2648.2px;top:491.3px;font-size:19.00px;line-height:19.00px;color:#111;font-weight:400;letter-spacing:0.469px;">Save name prefixes</div>
<div style="left:2649.6px;top:531.5px;width:178.7px;height:38.9px;background:#fff;box-shadow:0 1px 0 #b4b4b4,0 0 0 0.5px #d4d4d4;"></div>
<div style="left:2851.6px;top:531.5px;width:178.4px;height:38.9px;background:#fff;box-shadow:0 1px 0 #b4b4b4,0 0 0 0.5px #d4d4d4;"></div>
<div style="left:3063.7px;top:533.7px;width:82.2px;height:34.5px;background:#fff;box-shadow:0 1px 0 #b4b4b4,0 0 0 0.5px #d4d4d4;"></div>
<div class="t" style="left:3066.7px;top:542.9px;font-size:18.30px;line-height:18.30px;color:#000;font-weight:400;letter-spacing:0.000px;">0</div>
<div style="left:3151.0px;top:530.7px;width:25.6px;height:40.3px;background:#fff;border-radius:13px;box-shadow:0 0 0 1px rgba(0,0,0,0.07),0 1px 1.5px rgba(0,0,0,0.22);"></div>
<svg style="left:3151.0px;top:530.7px;" width="25.6" height="40.3" viewBox="0 0 25.6 40.3"><line x1="0" y1="20.1" x2="25.6" y2="20.1" stroke="#e6e6e6" stroke-width="1.5"/><polyline points="7.2,12.5 12.8,7.5 18.4,12.5" fill="none" stroke="#262626" stroke-width="2.9" stroke-linecap="round" stroke-linejoin="round"/><polyline points="7.2,28.0 12.8,33.0 18.4,28.0" fill="none" stroke="#262626" stroke-width="2.9" stroke-linecap="round" stroke-linejoin="round"/></svg>
<div class="t" style="left:3197.2px;top:543.4px;font-size:19.00px;line-height:19.00px;color:#111;font-weight:400;letter-spacing:0.547px;">Prefix</div>
<div class="t" style="left:3292.2px;top:543.4px;font-size:19.00px;line-height:19.00px;color:#111;font-weight:400;letter-spacing:1.933px;">00</div>
<div class="t" style="left:2648.2px;top:605.0px;font-size:19.00px;line-height:19.00px;color:#111;font-weight:400;letter-spacing:0.588px;">Select save folder</div>
<div style="left:2851.6px;top:593.7px;width:324.4px;height:38.3px;background:#fff;box-shadow:0 1px 0 #b4b4b4,0 0 0 0.5px #d4d4d4;"></div>
<div style="left:3199.9px;top:593.7px;width:123.9px;height:40.3px;background:#fff;border-radius:9px;box-shadow:0 0 0 0.75px rgba(0,0,0,0.10),0 1px 1.5px rgba(0,0,0,0.22);"></div>
<div class="t" style="left:3228.2px;top:604.1px;font-size:18.80px;line-height:18.80px;color:#111;font-weight:400;letter-spacing:0.644px;">Browse</div>
<div style="left:2648.2px;top:662.2px;width:26.9px;height:26.9px;background:#fff;border-radius:6px;box-shadow:0 0 0 1px rgba(0,0,0,0.09),0 1px 1.5px rgba(0,0,0,0.18);"></div>
<div class="t" style="left:2683.4px;top:668.0px;font-size:19.00px;line-height:19.00px;color:#111;font-weight:400;letter-spacing:0.803px;">restore streaming with</div>
<div style="left:3063.7px;top:658.1px;width:82.2px;height:34.3px;background:#fff;box-shadow:0 1px 0 #b4b4b4,0 0 0 0.5px #d4d4d4;"></div>
<div class="t" style="left:3065.7px;top:667.1px;font-size:18.30px;line-height:18.30px;color:#000;font-weight:400;letter-spacing:0.000px;">1</div>
<div style="left:3151.0px;top:654.6px;width:25.6px;height:40.5px;background:#fff;border-radius:13px;box-shadow:0 0 0 1px rgba(0,0,0,0.07),0 1px 1.5px rgba(0,0,0,0.22);"></div>
<svg style="left:3151.0px;top:654.6px;" width="25.6" height="40.5" viewBox="0 0 25.6 40.5"><line x1="0" y1="20.2" x2="25.6" y2="20.2" stroke="#e6e6e6" stroke-width="1.5"/><polyline points="7.2,12.7 12.8,7.7 18.4,12.7" fill="none" stroke="#262626" stroke-width="2.9" stroke-linecap="round" stroke-linejoin="round"/><polyline points="7.2,28.1 12.8,33.1 18.4,28.1" fill="none" stroke="#262626" stroke-width="2.9" stroke-linecap="round" stroke-linejoin="round"/></svg>
<div class="t" style="left:3197.2px;top:666.9px;font-size:19.00px;line-height:19.00px;color:#111;font-weight:400;letter-spacing:0.695px;">ms exp time</div>
<div style="left:2650.1px;top:717.8px;width:674.2px;height:40.3px;background:#fff;border-radius:9px;box-shadow:0 0 0 0.75px rgba(0,0,0,0.10),0 1px 1.5px rgba(0,0,0,0.22);"></div>
<div class="t" style="left:2917.6px;top:728.1px;font-size:18.60px;line-height:18.60px;color:#111;font-weight:400;letter-spacing:0.788px;">Acquire images</div>
<div style="left:2650.1px;top:786.3px;width:674.2px;height:39.8px;background:#fff;border-radius:9px;box-shadow:0 0 0 0.75px rgba(0,0,0,0.10),0 1px 1.5px rgba(0,0,0,0.22);"></div>
<div class="t" style="left:2813.5px;top:796.1px;font-size:18.60px;line-height:18.60px;color:#111;font-weight:400;letter-spacing:0.987px;">Acquire imges (without moving filters)</div>
<div style="left:2650.1px;top:854.3px;width:379.6px;height:39.7px;background:#fff;border-radius:9px;box-shadow:0 0 0 0.75px rgba(0,0,0,0.10),0 1px 1.5px rgba(0,0,0,0.22);"></div>
<div class="t" style="left:2695.2px;top:864.6px;font-size:18.60px;line-height:18.60px;color:#111;font-weight:400;letter-spacing:0.938px;">Do measurement multiple times</div>
<div style="left:3063.7px;top:855.7px;width:82.2px;height:34.2px;background:#fff;box-shadow:0 1px 0 #b4b4b4,0 0 0 0.5px #d4d4d4;"></div>
<div class="t" style="left:3066.7px;top:864.5px;font-size:18.30px;line-height:18.30px;color:#000;font-weight:400;letter-spacing:0.000px;">2</div>
<div style="left:3151.0px;top:852.4px;width:25.6px;height:40.8px;background:#fff;border-radius:13px;box-shadow:0 0 0 1px rgba(0,0,0,0.07),0 1px 1.5px rgba(0,0,0,0.22);"></div>
<svg style="left:3151.0px;top:852.4px;" width="25.6" height="40.8" viewBox="0 0 25.6 40.8"><line x1="0" y1="20.4" x2="25.6" y2="20.4" stroke="#e6e6e6" stroke-width="1.5"/><polyline points="7.2,12.8 12.8,7.8 18.4,12.8" fill="none" stroke="#262626" stroke-width="2.9" stroke-linecap="round" stroke-linejoin="round"/><polyline points="7.2,28.3 12.8,33.3 18.4,28.3" fill="none" stroke="#262626" stroke-width="2.9" stroke-linecap="round" stroke-linejoin="round"/></svg>
<div style="left:2646.1px;top:980.0px;width:300.0px;height:39.8px;background:#fff;border-radius:9px;box-shadow:0 0 0 0.75px rgba(0,0,0,0.10),0 1px 1.5px rgba(0,0,0,0.22);"></div>
<div class="t" style="left:2715.6px;top:990.1px;font-size:18.60px;line-height:18.60px;color:#111;font-weight:400;letter-spacing:0.914px;">Calculate rotation</div>
<div style="left:2976.7px;top:984.5px;width:26.7px;height:26.9px;background:#fff;border-radius:6px;box-shadow:0 0 0 1px rgba(0,0,0,0.09),0 1px 1.5px rgba(0,0,0,0.18);"></div>
<div class="t" style="left:3012.8px;top:989.9px;font-size:18.80px;line-height:18.80px;color:#111;font-weight:400;letter-spacing:0.769px;">Show marker fits</div>
<div class="t" style="left:3179.0px;top:989.9px;font-size:18.80px;line-height:18.80px;color:#111;font-weight:400;letter-spacing:0.000px;">-</div>
<div class="t" style="left:3262.0px;top:990.9px;font-size:18.80px;line-height:18.80px;color:#111;font-weight:400;letter-spacing:0.000px;">°</div>
<div style="left:2646.1px;top:1048.4px;width:300.0px;height:39.5px;background:#fff;border-radius:9px;box-shadow:0 0 0 0.75px rgba(0,0,0,0.10),0 1px 1.5px rgba(0,0,0,0.22);"></div>
<div class="t" style="left:2675.3px;top:1058.3px;font-size:18.60px;line-height:18.60px;color:#111;font-weight:400;letter-spacing:0.939px;">Change marker fit settings</div>
<div class="t" style="left:2657.6px;top:1098.8px;font-size:22.50px;line-height:22.50px;color:#000;font-weight:400;letter-spacing:0.635px;">Peak finder method</div>
<div style="left:2644.5px;top:1122.6px;width:681.1px;height:84.6px;background:#dddddd;border:1px solid #d5d5d5;border-radius:10px;"></div>
<div style="left:2673.8px;top:1154.0px;width:28.0px;height:28.0px;background:linear-gradient(#3396fb,#0870f8);border-radius:50%;box-shadow:0 0.5px 1.5px rgba(0,0,0,0.25);"></div>
<div style="left:2681.3px;top:1161.5px;width:13.0px;height:13.0px;background:#fff;border-radius:50%;"></div>
<div class="t" style="left:2711.6px;top:1160.2px;font-size:19.00px;line-height:19.00px;color:#1e1e1e;font-weight:400;letter-spacing:-0.369px;">Peak</div>
<div style="left:2998.4px;top:1154.7px;width:26.6px;height:26.6px;background:#fff;border-radius:50%;box-shadow:0 0 0 0.75px rgba(0,0,0,0.09),0 0.75px 1.5px rgba(0,0,0,0.18);"></div>
<div class="t" style="left:3035.5px;top:1160.2px;font-size:19.00px;line-height:19.00px;color:#1e1e1e;font-weight:400;letter-spacing:0.588px;">Peak and curvature</div>
<div class="t" style="left:2657.6px;top:1220.7px;font-size:22.50px;line-height:22.50px;color:#000;font-weight:400;letter-spacing:0.849px;">Hot pixel correction</div>
<div style="left:2644.5px;top:1244.5px;width:681.1px;height:84.8px;background:#dddddd;border:1px solid #d5d5d5;border-radius:10px;"></div>
<div style="left:2673.8px;top:1275.8px;width:28.0px;height:28.0px;background:linear-gradient(#3396fb,#0870f8);border-radius:50%;box-shadow:0 0.5px 1.5px rgba(0,0,0,0.25);"></div>
<div style="left:2681.3px;top:1283.3px;width:13.0px;height:13.0px;background:#fff;border-radius:50%;"></div>
<div class="t" style="left:2711.6px;top:1282.0px;font-size:19.00px;line-height:19.00px;color:#1e1e1e;font-weight:400;letter-spacing:0.648px;">None</div>
<div style="left:2872.5px;top:1276.5px;width:26.6px;height:26.6px;background:#fff;border-radius:50%;box-shadow:0 0 0 0.75px rgba(0,0,0,0.09),0 0.75px 1.5px rgba(0,0,0,0.18);"></div>
<div class="t" style="left:2910.2px;top:1282.0px;font-size:19.00px;line-height:19.00px;color:#1e1e1e;font-weight:400;letter-spacing:0.811px;">Correction with position from evauluation</div>
<div class="t" style="left:151.3px;top:1399.5px;font-size:19.30px;line-height:19.30px;color:#111;font-weight:400;letter-spacing:0.436px;">Status</div>
<div style="left:136.0px;top:1420.1px;width:3260.0px;height:367.9px;background:#e4e4e4;border:1px solid #d8d8d8;border-radius:10px;"></div>
<div class="t" style="left:165.1px;top:1474.3px;font-size:19.00px;line-height:19.00px;color:#111;font-weight:400;letter-spacing:0.622px;">Log Level:</div>
<div style="left:281.9px;top:1460.7px;width:170.1px;height:40.7px;background:#fff;border-radius:8px;box-shadow:0 0 0 0.75px rgba(0,0,0,0.10),0 1px 1.5px rgba(0,0,0,0.22);"></div>
<div style="left:416.0px;top:1465.1px;width:32.2px;height:31.9px;background:linear-gradient(#3396fb,#0870f8);border-radius:6px;"></div>
<svg style="left:416.0px;top:1465.1px;" width="32.2" height="31.9" viewBox="0 0 32.2 31.9"><polyline points="10.8,12 16.1,6.8 21.4,12" fill="none" stroke="#fff" stroke-width="2.5" stroke-linecap="round" stroke-linejoin="round"/><polyline points="10.8,19.6 16.1,24.8 21.4,19.6" fill="none" stroke="#fff" stroke-width="2.5" stroke-linecap="round" stroke-linejoin="round"/></svg>
<div class="t" style="left:299.5px;top:1472.8px;font-size:19.00px;line-height:19.00px;color:#111;font-weight:400;letter-spacing:-0.269px;">INFO</div>
<div style="left:166.1px;top:1536.3px;width:3198.4px;height:220.2px;background:#fff;border:1px solid #b0b0b0;border-top-color:#8e8e8e;border-left-color:#a0a0a0;"></div>
<div class="t" style="left:176.7px;top:1547.3px;font-size:19.20px;line-height:19.20px;color:#8a8a8a;font-weight:400;letter-spacing:1.016px;">[2025-11-25 20:20:03]</div>
<div class="t" style="left:391.6px;top:1547.3px;font-size:19.20px;line-height:19.20px;color:#16b6f6;font-weight:700;letter-spacing:0.536px;">[INFO]</div>
<div class="t" style="left:461.5px;top:1547.3px;font-size:19.20px;line-height:19.20px;color:#111;font-weight:400;letter-spacing:0.552px;">QuASIP application started</div>
<div class="t" style="left:176.7px;top:1569.3px;font-size:19.20px;line-height:19.20px;color:#8a8a8a;font-weight:400;letter-spacing:1.016px;">[2025-11-25 20:20:03]</div>
<div class="t" style="left:391.6px;top:1569.3px;font-size:19.20px;line-height:19.20px;color:#f5a00f;font-weight:700;letter-spacing:0.435px;">[WARNING]</div>
<div class="t" style="left:507.0px;top:1569.3px;font-size:19.20px;line-height:19.20px;color:#111;font-weight:400;letter-spacing:0.719px;">LightField support is not available on this system.</div>
<div class="t" style="left:176.7px;top:1591.2px;font-size:19.20px;line-height:19.20px;color:#8a8a8a;font-weight:400;letter-spacing:0.931px;">[2025-11-25 20:20:07]</div>
<div class="t" style="left:390.4px;top:1591.2px;font-size:19.20px;line-height:19.20px;color:#f5a00f;font-weight:700;letter-spacing:0.372px;">[WARNING]</div>
<div class="t" style="left:506.1px;top:1591.2px;font-size:19.20px;line-height:19.20px;color:#111;font-weight:400;letter-spacing:0.681px;">No marker template selected</div>
<div style="left:769.3px;top:1590.5px;width:2.0px;height:20.5px;background:#111;"></div>
<div style="left:112.0px;top:1812.0px;width:3307.0px;height:1.2px;background:#767676;"></div>
<div class="t" style="left:124.2px;top:1826.7px;font-size:27.00px;line-height:27.00px;color:#333;font-weight:400;letter-spacing:-0.182px;">Get a live image from the camera or take realspace images</div>
</body></html>
